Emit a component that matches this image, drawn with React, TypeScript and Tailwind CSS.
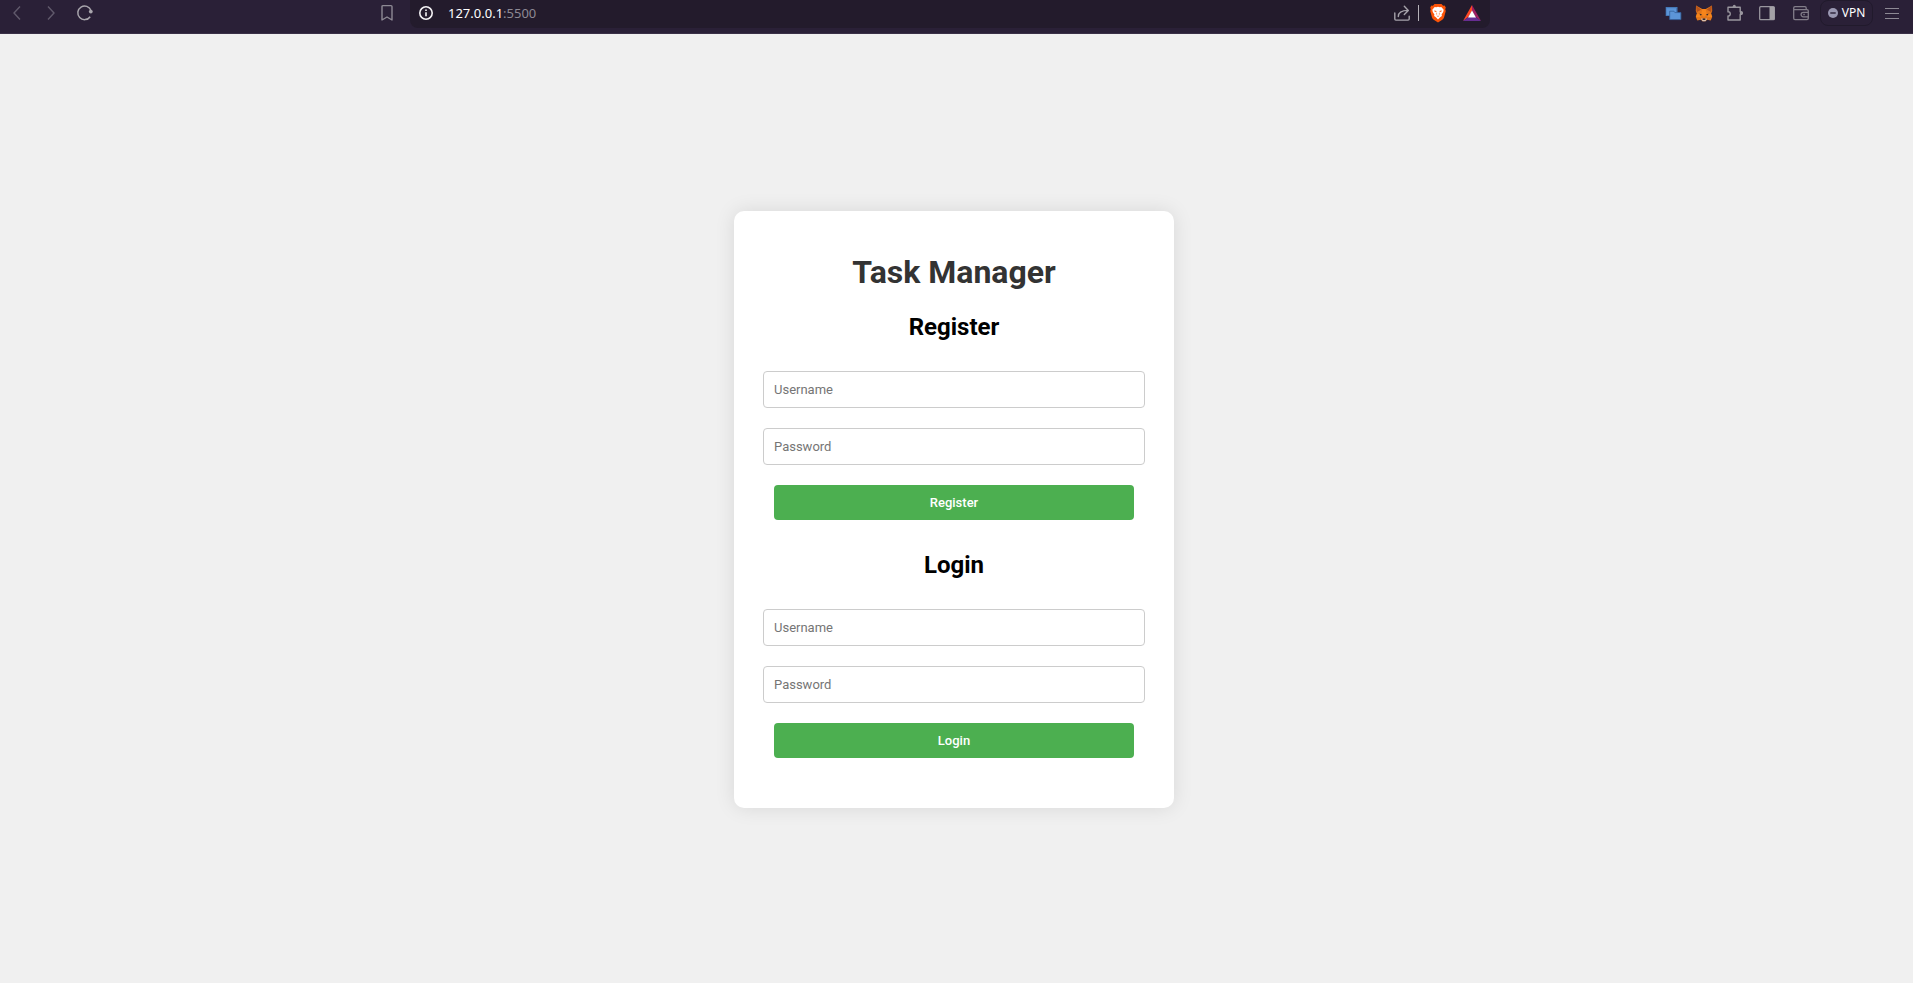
import type { ReactNode } from "react";

function BarButton({ label, className = "", children }: { label: string; className?: string; children: ReactNode }) {
  return (
    <button type="button" aria-label={label} className={`flex h-5 w-5 shrink-0 items-center justify-center ${className}`}>
      {children}
    </button>
  );
}

function ChevronIcon({ flipped = false }: { flipped?: boolean }) {
  return (
    <svg width="20" height="20" viewBox="0 0 20 20" fill="none" stroke="#615a6c" strokeWidth="1.4">
      <path d={flipped ? "M7 3.5l6 6.5-6 6.5" : "M13 3.5L7 10l6 6.5"} />
    </svg>
  );
}

function ReloadIcon() {
  return (
    <svg width="20" height="20" viewBox="0 0 20 20" fill="none" stroke="#a9a6ad" strokeWidth="1.5">
      <path d="M15.2 13.700A6.800 6.800 0 1 1 16 7.500" />
      <circle cx="15.800" cy="8.600" r="1.900" fill="#a9a6ad" stroke="none" />
    </svg>
  );
}

function BookmarkIcon() {
  return (
    <svg width="20" height="20" viewBox="0 0 20 20" fill="none" stroke="#8d8994" strokeWidth="1.4" strokeLinejoin="round">
      <path d="M5 3.6c0-.7.4-1 1-1h8c.6 0 1 .3 1 1V17l-5-3-5 3z" />
    </svg>
  );
}

function InfoIcon() {
  return (
    <svg width="20" height="20" viewBox="0 0 20 20" fill="none" stroke="#f4f3f5" strokeWidth="1.6">
      <circle cx="10" cy="10" r="6.2" />
      <path d="M10 9.2v4M10 6.4v1.5" />
    </svg>
  );
}

function ShareIcon() {
  return (
    <svg width="20" height="20" viewBox="0 0 20 20" fill="none" stroke="#a6a3aa" strokeWidth="1.4" strokeLinecap="round" strokeLinejoin="round">
      <path d="M2.8 10v6c0 .7.4 1.1 1.1 1.1h12.2c.7 0 1.1-.4 1.1-1.1v-2.7" />
      <path d="M6.3 13.6c0-4 2.6-6.2 9.8-6.2M12.3 3.3l4 4.1-4 4.1" />
    </svg>
  );
}

function BraveIcon() {
  return (
    <svg width="20" height="20" viewBox="0 0 20 20">
      <path fill="#fb5408" d="M6.500 1h7l1.600 1.800 1.500-.2 1.200 2-.6 1.600.6 1.800-1.800 6.600c-.3 1-.9 1.600-1.700 2.100L10 19.400l-4.300-2.700c-.8-.5-1.400-1.100-1.700-2.100L2.200 8l.6-1.800-.6-1.600 1.200-2 1.500.2z" />
      <path fill="#fff" d="M6.700 3.900l1.600.3L10 3.800l1.700.4 1.600-.3 2.400 2.900-.5 2.300-1.600 2.500.3 1.500-1.800 1.200L10 16.400l-2.100-2.100-1.800-1.200.3-1.500-1.600-2.500-.5-2.300z" />
      <path fill="#fb5408" d="M6.200 7.500l2.400.5-.5.9-1.600-.4zM13.800 7.500l-2.400.5.500.9 1.600-.4zM8.800 9l.4 2.200-.9.500zM11.200 9l-.4 2.200.9.500zM8.600 12.400l1.400.6 1.400-.6-.5.900-.9.500-.9-.5z" />
    </svg>
  );
}

function RewardsIcon() {
  return (
    <svg width="20" height="20" viewBox="0 0 20 20">
      <path fill="#ff4724" d="M10 2v6L6.300 14 1 18z" />
      <path fill="#9e1f63" d="M10 2l9 16-5.300-4L10 8z" />
      <path fill="#662d91" d="M1 18l5.300-4h7.400l5.300 4z" />
      <path fill="#fff" d="M10 7.600l4 6.900H6z" />
    </svg>
  );
}

function WindowsIcon() {
  return (
    <svg width="20" height="20" viewBox="0 0 20 20">
      <path fill="#4579b8" d="M2.700 4h11.800v9H2.700z" />
      <path fill="#5c95d8" d="M3.500 5.200h9.500v6.800h-9.500z" />
      <path fill="#5c95d8" stroke="#33619c" strokeWidth=".8" d="M6.700 8.200h4.200l1 1.400h6v7H6.700z" />
    </svg>
  );
}

function FoxIcon() {
  return (
    <svg width="20" height="20" viewBox="0 0 20 20">
      <path fill="#e2761b" d="M2 2.500l6.300 3.500h3.400L18 2.500l.2 5.500-1.100 2.700 1.100 3.300-1.500 3.600-3.600-.8-1.600 1.500h-3l-1.600-1.500-3.600.8L1.800 14l1.100-3.300L1.800 8z" />
      <path fill="#b5531b" d="M2 2.500l5.200 4.200-3 1.600-1.500 1zM18 2.500l-5.200 4.200 3 1.600 1.500 1z" />
      <path fill="#f6851b" d="M8.300 6h3.400l1.100 5.500L10 14l-2.800-2.500zM2.900 10.700l4.300.3-.5 3.200-4.900-.2zM17.100 10.700l-4.300.3.5 3.200 4.900-.2z" />
      <path fill="#302b30" d="M5.500 10.500l2.700 1.200-2 .8zM14.500 10.500l-2.700 1.200 2 .8zM8.500 15.600h3l.4 1.700H8.100z" />
      <path fill="#d7c1b3" d="M7 15.700l1.500-.5v1.900h3v-1.900l1.500.5-1.500 2.600h-3z" />
    </svg>
  );
}

function PuzzleIcon() {
  return (
    <svg width="20" height="20" viewBox="0 0 20 20" fill="none" stroke="#99969e" strokeWidth="1.4" strokeLinejoin="round">
      <path d="M3 4.200h12.200v4.600h.8a1.300 1.300 0 0 1 0 2.600h-.8V17H3v-4c3 .4 3-4.600 0-4.200z" />
      <circle cx="9.300" cy="3.200" r="1.500" fill="#99969e" stroke="none" />
      <circle cx="16.300" cy="10.100" r="1.600" fill="#99969e" stroke="none" />
    </svg>
  );
}

function SidebarIcon() {
  return (
    <svg width="20" height="20" viewBox="0 0 20 20">
      <rect x="2.700" y="3.700" width="14.600" height="13" rx="1" fill="none" stroke="#99969e" strokeWidth="1.300" />
      <path fill="#a3a1a6" d="M12.500 4h5v12.500h-5z" />
    </svg>
  );
}

function WalletIcon() {
  return (
    <svg width="20" height="20" viewBox="0 0 20 20" fill="none" stroke="#827d89" strokeWidth="1.300" strokeLinejoin="round">
      <path d="M15.200 6.500V5c0-.8-.4-1.300-1.300-1.300H4c-.8 0-1.300.5-1.300 1.300v10.200c0 .9.500 1.400 1.300 1.400h12c.8 0 1.300-.5 1.300-1.400V8c0-.8-.5-1.300-1.300-1.300H3" />
      <path d="M17.300 9.300h-5a2.200 2.200 0 0 0 0 4.500h5" />
      <path d="M12.300 11.500h1.500" />
    </svg>
  );
}

function VpnIcon() {
  return (
    <svg width="10" height="10" viewBox="0 0 10 10">
      <circle cx="5" cy="5" r="5" fill="#9a98b2" />
      <path stroke="#2a2037" strokeWidth="1.400" d="M2.300 5h5.400" />
    </svg>
  );
}

function MenuIcon() {
  return (
    <svg width="20" height="20" viewBox="0 0 20 20" stroke="#8d8994" strokeWidth="1.200">
      <path d="M3 5.500h14M3 10.500h14M3 15.500h14" />
    </svg>
  );
}

function BrowserBar() {
  return (
    <header className="grid h-[34px] grid-cols-[410px_minmax(0,1fr)_423px] items-start border-b border-[#3a3047] bg-[#2a2037] font-['Noto_Sans',sans-serif]">
      <nav aria-label="Navigation" className="flex h-[26px] items-center pr-[13px] pl-[7px]">
        <div className="flex flex-1 gap-[14px]">
          <BarButton label="Back"><ChevronIcon /></BarButton>
          <BarButton label="Forward"><ChevronIcon flipped /></BarButton>
          <BarButton label="Reload"><ReloadIcon /></BarButton>
        </div>
        <BarButton label="Bookmark this page"><BookmarkIcon /></BarButton>
      </nav>
      <div className="h-7 rounded-b-lg bg-[#231b2c]">
        <div className="flex h-[26px] items-center pr-2 pl-[6px]">
          <BarButton label="Site information"><InfoIcon /></BarButton>
          <p className="ml-3 flex-1 text-[13px] leading-5 text-[#8d8994]">
            <span className="text-white">127.0.0.1</span>:5500
          </p>
          <BarButton label="Share"><ShareIcon /></BarButton>
          <span className="ml-[6px] h-4 w-px bg-[#b5b2b8]" />
          <BarButton label="Shields" className="ml-[9px]"><BraveIcon /></BarButton>
          <BarButton label="Rewards" className="ml-[14px]"><RewardsIcon /></BarButton>
        </div>
      </div>
      <div className="flex h-[26px] items-center justify-end pr-[11px]">
        <div className="flex gap-[11px]">
          <BarButton label="Windows extension"><WindowsIcon /></BarButton>
          <BarButton label="Fox wallet extension"><FoxIcon /></BarButton>
          <BarButton label="Extensions"><PuzzleIcon /></BarButton>
        </div>
        <div className="ml-3 flex gap-[14px]">
          <BarButton label="Sidebar"><SidebarIcon /></BarButton>
          <BarButton label="Wallet"><WalletIcon /></BarButton>
        </div>
        <button type="button" className="ml-[9px] flex h-[26px] w-[53px] items-center justify-center gap-1 rounded-lg border border-[#211a2c] text-xs text-white">
          <VpnIcon />
          VPN
        </button>
        <BarButton label="Menu" className="ml-[9px]"><MenuIcon /></BarButton>
      </div>
    </header>
  );
}

function Field({ label, type }: { label: string; type: string }) {
  return (
    <input
      type={type}
      aria-label={label}
      placeholder={label}
      className="h-[37px] w-full rounded border border-[#cccccc] bg-white px-[10px] text-[13px] text-black placeholder:text-[#757575]"
    />
  );
}

function AccountForm({ title }: { title: string }) {
  return (
    <form aria-label={title} onSubmit={(event) => event.preventDefault()}>
      <h2 className="text-center text-2xl leading-7 font-bold text-black">{title}</h2>
      <div className="mt-[30px] flex flex-col gap-5">
        <Field label="Username" type="text" />
        <Field label="Password" type="password" />
        <button type="submit" className="mx-[11px] h-[35px] rounded bg-[#4caf50] text-[13px] font-medium text-white">
          {title}
        </button>
      </div>
    </form>
  );
}

export default function App() {
  return (
    <div className="flex min-h-screen flex-col bg-[#f0f0f0] font-[Roboto,sans-serif]">
      <BrowserBar />
      <main className="flex flex-1 items-center justify-center pt-[2px] pr-[5px]">
        <div className="w-full max-w-[440px] rounded-[10px] bg-white px-[29px] pt-[42px] pb-[50px] shadow-[0_0_20px_rgba(0,0,0,0.1)]">
          <h1 className="mb-[22px] text-center text-[32px] leading-[38px] font-bold text-[#333333]">Task Manager</h1>
          <div className="flex flex-col gap-[31px]">
            <AccountForm title="Register" />
            <AccountForm title="Login" />
          </div>
        </div>
      </main>
    </div>
  );
}
